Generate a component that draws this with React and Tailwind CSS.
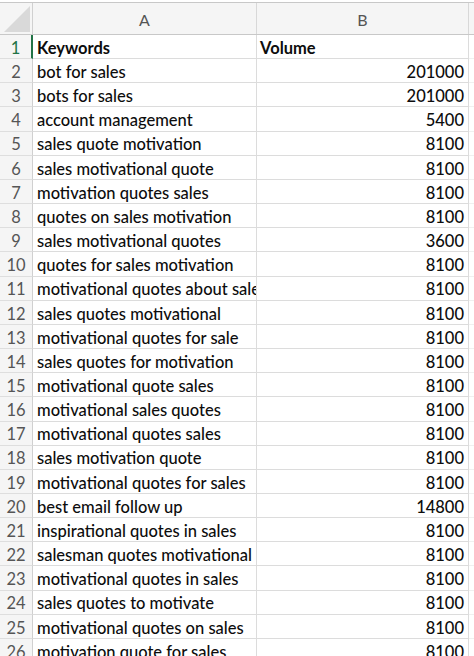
import React from "react";

const rows = [
  ["Keywords", "Volume", true],
  ["bot for sales", "201000"],
  ["bots for sales", "201000"],
  ["account management", "5400"],
  ["sales quote motivation", "8100"],
  ["sales motivational quote", "8100"],
  ["motivation quotes sales", "8100"],
  ["quotes on sales motivation", "8100"],
  ["sales motivational quotes", "3600"],
  ["quotes for sales motivation", "8100"],
  ["motivational quotes about sales", "8100"],
  ["sales quotes motivational", "8100"],
  ["motivational quotes for sale", "8100"],
  ["sales quotes for motivation", "8100"],
  ["motivational quote sales", "8100"],
  ["motivational sales quotes", "8100"],
  ["motivational quotes sales", "8100"],
  ["sales motivation quote", "8100"],
  ["motivational quotes for sales", "8100"],
  ["best email follow up", "14800"],
  ["inspirational quotes in sales", "8100"],
  ["salesman quotes motivational", "8100"],
  ["motivational quotes in sales", "8100"],
  ["sales quotes to motivate", "8100"],
  ["motivational quotes on sales", "8100"],
  ["motivation quote for sales", "8100"],
];

export default function App() {
  return (
    <div
      className="w-[474px] h-[656px] overflow-hidden bg-white text-[#0d0d0d]"
      style={{ fontFamily: "Lato, 'Open Sans', sans-serif" }}
    >
      <div className="h-[2px] bg-white" />
      <div className="flex h-[33px] border-t border-b border-[#c8c8c8] bg-[#f5f5f5] text-[#555] text-[16px]">
        <div className="relative w-[33px] shrink-0 border-r border-[#d0d0d0]">
          <svg className="absolute right-[2px] bottom-[2px]" width="26" height="26" viewBox="0 0 26 26">
            <polygon points="26,0 26,26 0,26" fill="#d9d9d9" />
          </svg>
        </div>
        <div className="w-[224px] shrink-0 border-r border-[#d8d8d8] flex items-center justify-center pt-[2px]">A</div>
        <div className="w-[212px] shrink-0 border-r border-[#d8d8d8] flex items-center justify-center pt-[2px]">B</div>
        <div className="flex-1" />
      </div>
      {rows.map(([a, b, head], i) => (
        <div key={i} className="flex h-[24.17px] text-[16.5px] leading-none">
          <div
            className={
              "w-[33px] shrink-0 bg-[#f5f5f5] flex items-center justify-center pt-[3px] border-b border-[#dedede] " +
              (i === 0 ? "text-[#217346] border-r-2 border-r-[#217346]" : "text-[#555] border-r border-r-[#d0d0d0]")
            }
          >
            {i + 1}
          </div>
          <div
            className={
              "w-[224px] shrink-0 border-r border-b border-[#dcdcdc] flex items-center pt-[3px] pl-[4px] whitespace-nowrap overflow-hidden " +
              (head ? "font-bold" : "font-medium")
            }
          >
            {a}
          </div>
          <div
            className={
              "w-[212px] shrink-0 border-r border-b border-[#dcdcdc] flex items-center pt-[3px] whitespace-nowrap " +
              (head ? "font-bold justify-start pl-[3px]" : "font-medium justify-end pr-[4px]")
            }
          >
            {b}
          </div>
          <div className="flex-1 border-b border-[#f0f0f0]" />
        </div>
      ))}
    </div>
  );
}
